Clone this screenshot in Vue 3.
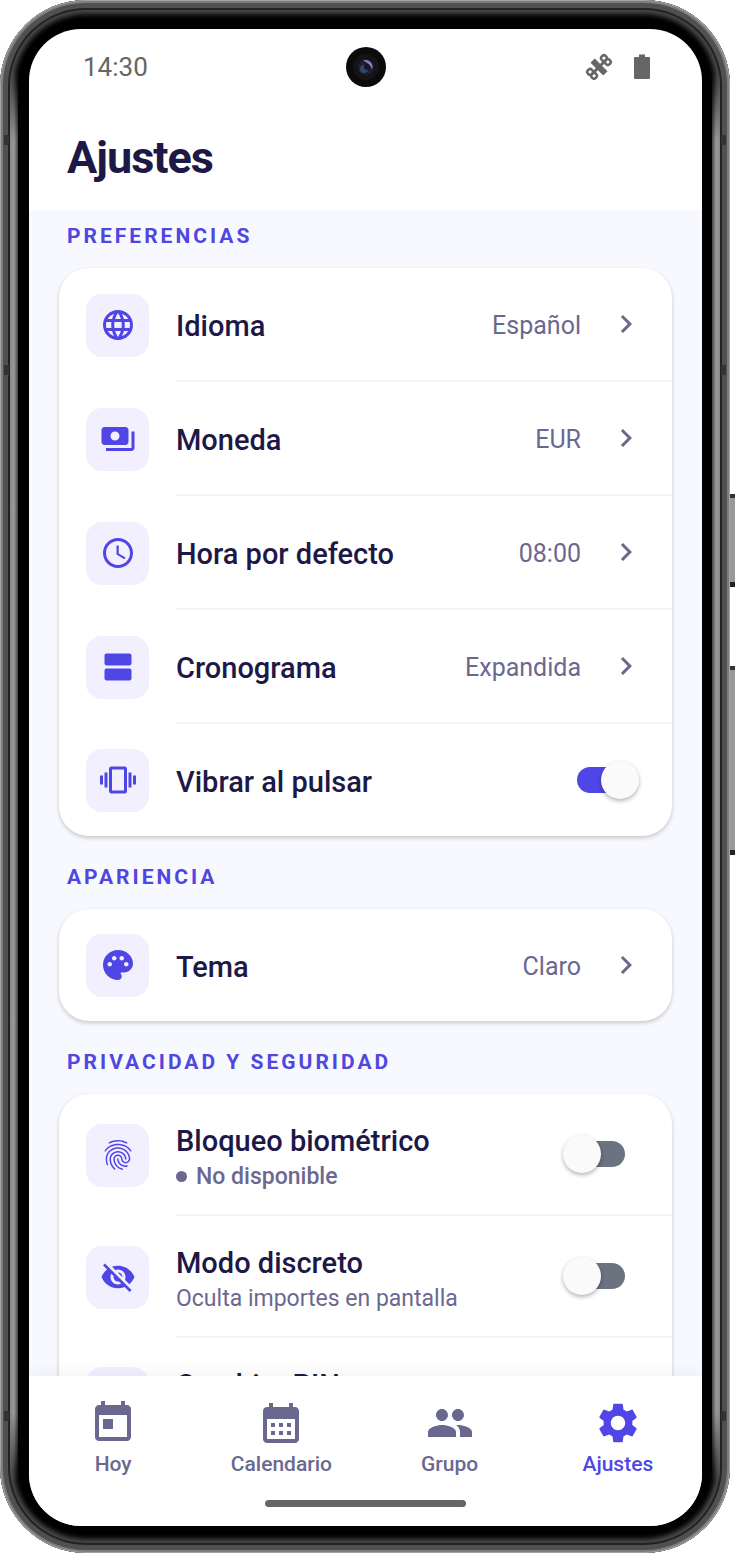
<script setup>
import { ref } from 'vue';

const icons = {
  globe: 'M11.99 2C6.47 2 2 6.48 2 12s4.47 10 9.99 10C17.52 22 22 17.52 22 12S17.52 2 11.99 2zm6.93 6h-2.95a15.65 15.65 0 0 0-1.38-3.56A8.03 8.03 0 0 1 18.92 8zM12 4.04c.83 1.2 1.48 2.53 1.91 3.96h-3.82c.43-1.43 1.08-2.76 1.91-3.96zM4.26 14C4.1 13.36 4 12.69 4 12s.1-1.36.26-2h3.38c-.08.66-.14 1.32-.14 2 0 .68.06 1.34.14 2H4.26zm.82 2h2.95c.32 1.25.78 2.45 1.38 3.56A7.987 7.987 0 0 1 5.08 16zm2.95-8H5.08a7.987 7.987 0 0 1 4.33-3.56A15.65 15.65 0 0 0 8.03 8zM12 19.96c-.83-1.2-1.48-2.53-1.91-3.96h3.82c-.43 1.43-1.08 2.76-1.91 3.96zM14.34 14H9.66c-.09-.66-.16-1.32-.16-2 0-.68.07-1.35.16-2h4.68c.09.65.16 1.32.16 2 0 .68-.07 1.34-.16 2zm.25 5.56c.6-1.11 1.06-2.31 1.38-3.56h2.95a8.03 8.03 0 0 1-4.33 3.56zM16.36 14c.08-.66.14-1.32.14-2 0-.68-.06-1.34-.14-2h3.38c.16.64.26 1.31.26 2s-.1 1.36-.26 2h-3.38z',
  money: 'M19 14V6c0-1.1-.9-2-2-2H3c-1.1 0-2 .9-2 2v8c0 1.1.9 2 2 2h14c1.1 0 2-.9 2-2zm-9-1c-1.66 0-3-1.34-3-3s1.34-3 3-3 3 1.34 3 3-1.34 3-3 3zm13-6v11c0 1.1-.9 2-2 2H4v-2h17V7h2z',
  clock: 'M11.99 2C6.47 2 2 6.48 2 12s4.47 10 9.99 10C17.52 22 22 17.52 22 12S17.52 2 11.99 2zM12 20c-4.42 0-8-3.58-8-8s3.58-8 8-8 8 3.58 8 8-3.58 8-8 8zM12.5 7H11v6l5.25 3.15.75-1.23-4.5-2.67z',
  rows: 'M19.7 13H4.3c-.7 0-1.3.6-1.3 1.3v5.4c0 .7.6 1.3 1.3 1.3h15.4c.7 0 1.3-.6 1.3-1.3v-5.4c0-.7-.6-1.3-1.3-1.3zM19.7 3H4.3C3.6 3 3 3.6 3 4.3v5.4c0 .7.6 1.3 1.3 1.3h15.4c.7 0 1.3-.6 1.3-1.3V4.3c0-.7-.6-1.3-1.3-1.3z',
  vibrate: 'M0 15h2V9H0v6zm3 2h2V7H3v10zm19-8v6h2V9h-2zm-3 8h2V7h-2v10zM16.5 3h-9C6.67 3 6 3.67 6 4.5v15c0 .83.67 1.5 1.5 1.5h9c.83 0 1.5-.67 1.5-1.5v-15c0-.83-.67-1.5-1.5-1.5zM16 19H8V5h8v14z',
  palette: 'M12 2C6.49 2 2 6.49 2 12s4.49 10 10 10c1.38 0 2.5-1.12 2.5-2.5 0-.61-.23-1.2-.64-1.67-.08-.1-.13-.21-.13-.33 0-.28.22-.5.5-.5H16c3.31 0 6-2.69 6-6 0-4.96-4.49-9-10-9zm5.5 11c-.83 0-1.5-.67-1.5-1.5s.67-1.5 1.5-1.5 1.5.67 1.5 1.5-.67 1.5-1.5 1.5zm-3-4c-.83 0-1.5-.67-1.5-1.5S13.67 6 14.5 6s1.5.67 1.5 1.5S15.33 9 14.5 9zM5 11.5c0-.83.67-1.5 1.5-1.5s1.5.67 1.5 1.5S7.33 13 6.5 13 5 12.33 5 11.5zm6-4c0 .83-.67 1.5-1.5 1.5S8 8.33 8 7.5 8.67 6 9.5 6s1.5.67 1.5 1.5z',
  fingerprint: 'M17.81 4.47c-.08 0-.16-.02-.23-.06C15.66 3.42 14 3 12.01 3c-1.98 0-3.86.47-5.57 1.41-.24.13-.54.04-.68-.2-.13-.24-.04-.55.2-.68C7.82 2.52 9.86 2 12.01 2c2.13 0 3.99.47 6.03 1.52.25.13.34.43.21.67-.09.18-.26.28-.44.28zM3.5 9.72c-.1 0-.2-.03-.29-.09-.23-.16-.28-.47-.12-.7.99-1.4 2.25-2.5 3.75-3.27C9.98 4.04 14 4.03 17.15 5.65c1.5.77 2.76 1.86 3.75 3.25.16.22.11.54-.12.7-.23.16-.54.11-.7-.12-.9-1.26-2.04-2.25-3.39-2.94-2.87-1.47-6.54-1.47-9.4.01-1.36.7-2.5 1.7-3.4 2.96-.08.14-.23.21-.39.21zm6.25 12.07c-.13 0-.26-.05-.35-.15-.87-.87-1.34-1.43-2.01-2.64-.69-1.23-1.05-2.73-1.05-4.34 0-2.97 2.54-5.39 5.66-5.39s5.66 2.42 5.66 5.39c0 .28-.22.5-.5.5s-.5-.22-.5-.5c0-2.42-2.09-4.39-4.66-4.39-2.57 0-4.66 1.97-4.66 4.39 0 1.44.32 2.77.93 3.85.64 1.15 1.08 1.64 1.85 2.42.19.2.19.51 0 .71-.11.1-.24.15-.37.15zm7.17-1.85c-1.19 0-2.24-.3-3.1-.89-1.49-1.01-2.38-2.65-2.38-4.39 0-.28.22-.5.5-.5s.5.22.5.5c0 1.41.72 2.74 1.94 3.56.71.48 1.54.71 2.54.71.24 0 .64-.03 1.04-.1.27-.05.53.13.58.41.05.27-.13.53-.41.58-.57.11-1.07.12-1.21.12zM14.91 22c-.04 0-.09-.01-.13-.02-1.59-.44-2.63-1.03-3.72-2.1-1.4-1.39-2.17-3.24-2.17-5.22 0-1.62 1.38-2.94 3.08-2.94 1.7 0 3.08 1.32 3.08 2.94 0 1.07.93 1.94 2.08 1.94s2.08-.87 2.08-1.94c0-3.77-3.25-6.83-7.25-6.83-2.84 0-5.44 1.58-6.61 4.03-.39.81-.59 1.76-.59 2.8 0 .78.07 2.01.67 3.61.1.26-.03.55-.29.64-.26.1-.55-.04-.64-.29-.49-1.31-.73-2.61-.73-3.96 0-1.2.23-2.29.68-3.24 1.33-2.79 4.28-4.6 7.51-4.6 4.55 0 8.25 3.51 8.25 7.83 0 1.62-1.38 2.94-3.08 2.94s-3.08-1.32-3.08-2.94c0-1.07-.93-1.94-2.08-1.94s-2.08.87-2.08 1.94c0 1.71.66 3.31 1.87 4.51.95.94 1.86 1.46 3.27 1.85.27.07.42.35.35.61-.05.23-.26.38-.47.38z',
  eyeOff: 'M12 7c2.76 0 5 2.24 5 5 0 .65-.13 1.26-.36 1.83l2.92 2.92c1.51-1.26 2.7-2.89 3.43-4.75-1.73-4.39-6-7.5-11-7.5-1.4 0-2.74.25-3.98.7l2.16 2.16C10.74 7.13 11.35 7 12 7zM2 4.27l2.28 2.28.46.46C3.08 8.3 1.78 10.02 1 12c1.73 4.39 6 7.5 11 7.5 1.55 0 3.03-.3 4.38-.84l.42.42L19.73 22 21 20.73 3.27 3 2 4.27zM7.53 9.8l1.55 1.55c-.05.21-.08.43-.08.65 0 1.66 1.34 3 3 3 .22 0 .44-.03.65-.08l1.55 1.55c-.67.33-1.41.53-2.2.53-2.76 0-5-2.24-5-5 0-.79.2-1.53.53-2.2zm4.31-.78l3.15 3.15.02-.16c0-1.66-1.34-3-3-3l-.17.01z',
  chevron: 'M8.59 16.59L13.17 12 8.59 7.41 10 6l6 6-6 6z',
  today: 'M19 3h-1V1h-2v2H8V1H6v2H5c-1.11 0-1.99.9-1.99 2L3 19c0 1.1.89 2 2 2h14c1.1 0 2-.9 2-2V5c0-1.1-.9-2-2-2zm0 16H5V8h14v11zM7 10h5v5H7z',
  calendar: 'M19 4h-1V2h-2v2H8V2H6v2H5c-1.11 0-1.99.9-1.99 2L3 20c0 1.1.89 2 2 2h14c1.1 0 2-.9 2-2V6c0-1.1-.9-2-2-2zm0 16H5V10h14v10zM9 14H7v-2h2v2zm4 0h-2v-2h2v2zm4 0h-2v-2h2v2zm-8 4H7v-2h2v2zm4 0h-2v-2h2v2zm4 0h-2v-2h2v2z',
  group: 'M16 11c1.66 0 2.99-1.34 2.99-3S17.66 5 16 5c-1.66 0-3 1.34-3 3s1.34 3 3 3zm-8 0c1.66 0 2.99-1.34 2.99-3S9.66 5 8 5C6.34 5 5 6.34 5 8s1.34 3 3 3zm0 2c-2.33 0-7 1.17-7 3.5V19h14v-2.5c0-2.33-4.67-3.5-7-3.5zm8 0c-.29 0-.62.02-.97.05 1.16.84 1.97 1.97 1.97 3.45V19h6v-2.5c0-2.33-4.67-3.5-7-3.5z',
  gear: 'M19.14 12.94c.04-.3.06-.61.06-.94 0-.32-.02-.64-.07-.94l2.03-1.58c.18-.14.23-.41.12-.61l-1.92-3.32c-.12-.22-.37-.29-.59-.22l-2.39.96c-.5-.38-1.03-.7-1.62-.94l-.36-2.54c-.04-.24-.24-.41-.48-.41h-3.84c-.24 0-.43.17-.47.41l-.36 2.54c-.59.24-1.13.57-1.62.94l-2.39-.96c-.22-.08-.47 0-.59.22L2.74 8.87c-.12.21-.08.47.12.61l2.03 1.58c-.05.3-.09.63-.09.94s.02.64.07.94l-2.03 1.58c-.18.14-.23.41-.12.61l1.92 3.32c.12.22.37.29.59.22l2.39-.96c.5.38 1.03.7 1.62.94l.36 2.54c.05.24.24.41.48.41h3.84c.24 0 .44-.17.47-.41l.36-2.54c.59-.24 1.13-.56 1.62-.94l2.39.96c.22.08.47 0 .59-.22l1.92-3.32c.12-.22.07-.47-.12-.61l-2.01-1.58zM12 15.6c-1.98 0-3.6-1.62-3.6-3.6s1.62-3.6 3.6-3.6 3.6 1.62 3.6 3.6-1.62 3.6-3.6 3.6z',
};

const sections = ref([
  {
    title: 'PREFERENCIAS',
    rows: [
      { id: 'language', icon: 'globe', label: 'Idioma', value: 'Español' },
      { id: 'currency', icon: 'money', label: 'Moneda', value: 'EUR' },
      { id: 'hour', icon: 'clock', label: 'Hora por defecto', value: '08:00' },
      { id: 'timeline', icon: 'rows', label: 'Cronograma', value: 'Expandida' },
      { id: 'vibrate', icon: 'vibrate', label: 'Vibrar al pulsar', toggle: true, on: true },
    ],
  },
  {
    title: 'APARIENCIA',
    rows: [
      { id: 'theme', icon: 'palette', label: 'Tema', value: 'Claro' },
    ],
  },
  {
    title: 'PRIVACIDAD Y SEGURIDAD',
    rows: [
      { id: 'biometric', icon: 'fingerprint', label: 'Bloqueo biométrico', status: 'No disponible', tall: true, toggle: true, on: false },
      { id: 'discreet', icon: 'eyeOff', label: 'Modo discreto', hint: 'Oculta importes en pantalla', tall: true, toggle: true, on: false },
      { id: 'pin', icon: 'rows', label: 'Cambiar PIN', tall: true },
    ],
  },
]);

const tabs = [
  { id: 'today', icon: 'today', label: 'Hoy' },
  { id: 'calendar', icon: 'calendar', label: 'Calendario' },
  { id: 'group', icon: 'group', label: 'Grupo' },
  { id: 'settings', icon: 'gear', label: 'Ajustes' },
];
const activeTab = ref('settings');
</script>

<template>
  <div class="stage">
    <div class="phone">
      <span class="band band-left band-top"></span>
      <span class="band band-left band-upper"></span>
      <span class="band band-left band-bottom"></span>
      <span class="band band-right band-top"></span>
      <span class="band band-right band-upper"></span>
      <span class="band band-right band-bottom"></span>
      <div class="screen">
        <div class="status-bar">
          <span class="time">14:30</span>
          <svg class="camera" viewBox="0 0 40 40" aria-hidden="true">
            <circle cx="20" cy="20" r="20" fill="#0b0b0c" />
            <circle cx="20" cy="20" r="13" fill="#141416" />
            <circle cx="20" cy="20" r="8" fill="#1c2130" />
            <path d="M17 13.500a7 7 0 0 1 9 9c-1-4-4-7-9-9z" fill="#9a7cc4" />
            <circle cx="18" cy="22" r="4" fill="#32456b" />
            <circle cx="21" cy="20" r="3" fill="#17142b" />
          </svg>
          <div class="status-icons">
            <svg class="satellite" viewBox="0 0 28 28" aria-hidden="true">
              <g transform="rotate(-45 14 14)" fill="none" stroke="#666">
                <path d="M7 14h14" stroke-width="3" />
                <path d="M14 5v18" stroke-width="6" />
                <rect x="1.500" y="8.500" width="5.500" height="5.500" rx="2.500" stroke-width="2.500" />
                <rect x="1.500" y="14" width="5.500" height="5.500" rx="2.500" stroke-width="2.500" />
                <rect x="21" y="8.500" width="5.500" height="5.500" rx="2.500" stroke-width="2.500" />
                <rect x="21" y="14" width="5.500" height="5.500" rx="2.500" stroke-width="2.500" />
              </g>
            </svg>
            <svg class="battery" viewBox="0 0 16 26" aria-hidden="true">
              <path d="M5 .5h6v2.500h4q1 0 1 1v20q0 1-1 1H1q-1 0-1-1V4q0-1 1-1h4z" fill="#666" />
            </svg>
          </div>
        </div>

        <header class="header">
          <h1>Ajustes</h1>
        </header>

        <main class="content">
          <section v-for="section in sections" :key="section.title" class="section">
            <h2>{{ section.title }}</h2>
            <div class="card">
              <component
                :is="row.toggle ? 'label' : 'button'"
                v-for="row in section.rows"
                :key="row.id"
                class="row"
                :class="{ tall: row.tall }"
              >
                <span class="icon-box">
                  <svg viewBox="0 0 24 24" aria-hidden="true"><path :d="icons[row.icon]" /></svg>
                </span>
                <span class="body">
                  <span class="text">
                    <span class="label">{{ row.label }}</span>
                    <span v-if="row.tall" class="hint" :class="{ status: row.status }">
                      {{ row.status || row.hint }}
                    </span>
                  </span>
                  <span v-if="row.value" class="value">{{ row.value }}</span>
                  <input v-if="row.toggle" v-model="row.on" type="checkbox" class="switch" />
                  <svg v-else class="chevron" viewBox="0 0 24 24" aria-hidden="true">
                    <path :d="icons.chevron" />
                  </svg>
                </span>
              </component>
            </div>
          </section>
        </main>

        <footer class="footer">
          <nav class="tabs">
            <button
              v-for="tab in tabs"
              :key="tab.id"
              class="tab"
              :class="{ active: activeTab === tab.id }"
              @click="activeTab = tab.id"
            >
              <svg viewBox="0 0 24 24" aria-hidden="true"><path :d="icons[tab.icon]" /></svg>
              {{ tab.label }}
            </button>
          </nav>
          <div class="home-bar"></div>
        </footer>
      </div>
    </div>
    <div class="keys">
      <span class="key power"></span>
      <span class="key volume"></span>
    </div>
  </div>
</template>

<style>
body {
  margin: 0;
  background: #fff;
}
</style>

<style scoped>
.stage {
  display: flex;
  height: 100vh;
  font-family: Roboto, "Liberation Sans", sans-serif;
  color: #1e1847;
}

.phone {
  position: relative;
  flex: 1;
  min-width: 0;
  box-sizing: border-box;
  padding: 29px 28px 27px 29px;
  border-radius: 86px;
  background: #000;
  box-shadow:
    inset 0 0 0 1px #a4a4a4,
    inset 0 0 0 3px #7c7c7c,
    inset 0 0 0 8px #505050,
    inset 0 0 0 10px #222,
    inset 0 0 5px 14px #4a4a4a;
}

/* highlight along the straight sides, fading out before the corners */
.phone::before,
.phone::after {
  content: "";
  position: absolute;
  top: 70px;
  bottom: 70px;
  width: 8px;
  mask-image: linear-gradient(transparent, #000 70px, #000 calc(100% - 70px), transparent);
}

.phone::before {
  left: 10px;
  background: linear-gradient(90deg, #8a8a8a, #999 50%, #444);
}

.phone::after {
  right: 10px;
  background: linear-gradient(270deg, #8a8a8a, #999 50%, #444);
}

/* antenna lines across the metal frame */
.band {
  position: absolute;
  width: 5px;
  height: 10px;
  background: #333;
}

.band-left {
  left: 4px;
}

.band-right {
  right: 4px;
}

.band-top {
  top: 135px;
}

.band-upper {
  top: 365px;
}

.band-bottom {
  bottom: 132px;
}

.keys {
  display: flex;
  flex-direction: column;
  gap: 79px;
  width: 5px;
  padding-top: 494px;
}

.key {
  background: #999;
  border-top: 4px solid #333;
  border-bottom: 5px solid #222;
}

.power {
  height: 84px;
}

.volume {
  height: 180px;
}

.screen {
  display: flex;
  flex-direction: column;
  height: 100%;
  overflow: hidden;
  border-radius: 52px;
  background: #fff;
}

.status-bar {
  display: grid;
  grid-template-columns: 1fr auto 1fr;
  align-items: center;
  height: 76px;
  padding: 0 52px;
}

.time {
  padding-left: 2px;
  font-size: 26px;
  color: #666;
}

.camera {
  width: 40px;
  height: 40px;
}

.status-icons {
  display: flex;
  justify-content: flex-end;
  align-items: center;
  gap: 21px;
}

.satellite {
  width: 28px;
  height: 28px;
}

.battery {
  width: 16px;
  height: 26px;
}

.header {
  display: flex;
  align-items: center;
  height: 105px;
  padding: 0 38px;
}

h1 {
  margin: 0;
  font-size: 45px;
  line-height: 52px;
  font-weight: 700;
  letter-spacing: -1px;
}

.content {
  flex: 1;
  min-height: 0;
  overflow: hidden;
  padding: 0 30px;
  background: #f7f9fe;
}

.section {
  padding-bottom: 15px;
}

h2 {
  margin: 0;
  padding: 14px 8px 20px;
  font-size: 21px;
  line-height: 24px;
  font-weight: 700;
  letter-spacing: 3px;
  color: #5046e0;
}

.card {
  overflow: hidden;
  border-radius: 30px;
  background: #fff;
  box-shadow: 0 2px 4px rgba(0, 0, 0, 0.2);
}

.row {
  display: flex;
  align-items: stretch;
  box-sizing: border-box;
  width: 100%;
  padding: 0 0 0 27px;
  border: 0;
  background: none;
  font: inherit;
  color: inherit;
  text-align: left;
  cursor: pointer;
}

.icon-box {
  display: flex;
  align-items: center;
  justify-content: center;
  align-self: center;
  width: 63px;
  height: 63px;
  margin-right: 27px;
  border-radius: 16px;
  background: #f2f0fe;
}

.icon-box svg {
  width: 36px;
  height: 36px;
  fill: #4f46e5;
}

.body {
  display: flex;
  flex: 1;
  align-items: center;
  gap: 27px;
  min-height: 112px;
  padding-right: 28px;
}

.tall .body {
  min-height: 120px;
}

.row:not(:last-child) .body {
  border-bottom: 2px solid #f5f5f7;
}

.text {
  display: flex;
  flex: 1;
  flex-direction: column;
  gap: 4px;
  padding-top: 4px;
}

.tall .text {
  gap: 3px;
  padding-top: 8px;
}

.label {
  font-size: 29px;
  line-height: 34px;
  font-weight: 500;
}

.hint {
  display: flex;
  align-items: center;
  gap: 9px;
  min-height: 32px;
  font-size: 23px;
  line-height: 32px;
  color: #6b6890;
}

.status {
  font-weight: 500;
}

.status::before {
  content: "";
  width: 11px;
  height: 11px;
  border-radius: 50%;
  background: #6b6890;
}

.value {
  padding-top: 2px;
  font-size: 25px;
  color: #6b6890;
}

.chevron {
  width: 36px;
  height: 36px;
  fill: #6b6890;
}

.switch {
  position: relative;
  width: 76px;
  height: 38px;
  margin: 0 5px 0 0;
  appearance: none;
  cursor: pointer;
}

.switch::before {
  content: "";
  position: absolute;
  inset: 6px 14px;
  border-radius: 13px;
  background: #6b7280;
}

.switch::after {
  content: "";
  position: absolute;
  top: 0;
  left: 0;
  width: 38px;
  height: 38px;
  border-radius: 50%;
  background: #fafafa;
  box-shadow: 0 2px 4px rgba(0, 0, 0, 0.3);
}

.switch:checked::before {
  background: #4f46e5;
}

.switch:checked::after {
  left: 38px;
}

.footer {
  position: relative;
  background: #fff;
  box-shadow: 0 -2px 16px rgba(0, 0, 0, 0.06);
}

.tabs {
  display: flex;
  padding-top: 23px;
}

.tab {
  display: flex;
  flex: 1;
  flex-direction: column;
  align-items: center;
  gap: 4px;
  padding: 0;
  border: 0;
  background: none;
  font: 500 21px/26px Roboto, "Liberation Sans", sans-serif;
  color: #6b6890;
  cursor: pointer;
}

.tab svg {
  width: 48px;
  height: 48px;
  fill: currentColor;
}

.tab.active {
  color: #4f46e5;
}

.home-bar {
  width: 30%;
  height: 7px;
  margin: 23px auto 19px;
  border-radius: 4px;
  background: #666;
}
</style>
